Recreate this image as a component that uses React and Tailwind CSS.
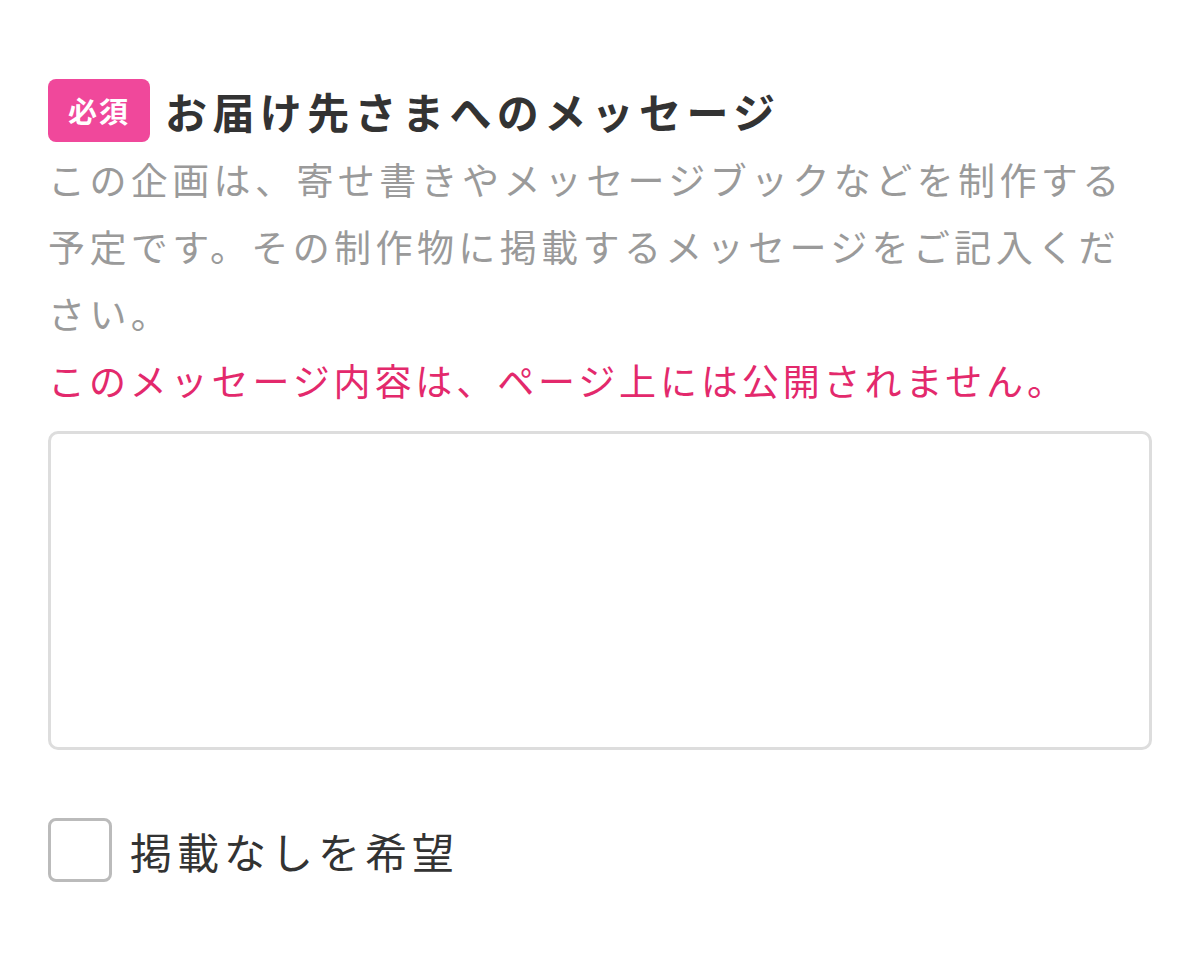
import { useState } from "react";

const App = () => {
  const [message, setMessage] = useState("");
  const [noPublish, setNoPublish] = useState(false);

  return (
    <div
      className="min-h-[967px] bg-white px-[48px] pt-[79px]"
      style={{ fontFamily: '"Noto Sans CJK JP", "Noto Sans", sans-serif' }}
    >
      {/* Heading */}
      <div className="flex items-center gap-[15px]">
        <span className="flex h-[63px] w-[102px] items-center justify-center rounded-[8px] bg-[#f0489b] text-[29px] font-bold tracking-[2px] text-white">
          必須
        </span>
        <h2 className="text-[42px] font-bold leading-none tracking-[5.4px] text-[#333333]">
          お届け先さまへのメッセージ
        </h2>
      </div>

      {/* Description */}
      <p className="mt-[4px] text-[37px] leading-[67px] tracking-[4.4px] text-[#9a9a9a]">
        この企画は、寄せ書きやメッセージブックなどを制作する予定です。その制作物に掲載するメッセージをご記入ください。
      </p>
      <p className="text-[37px] leading-[67px] tracking-[3.9px] text-[#e3296c]">
        このメッセージ内容は、ページ上には公開されません。
      </p>

      {/* Message box */}
      <textarea
        value={message}
        onChange={(e) => setMessage(e.target.value)}
        className="mt-[17px] block h-[319px] w-full resize-none rounded-[10px] border-[3px] border-[#dddddd] p-4 text-[32px] outline-none"
      />

      {/* Opt-out checkbox */}
      <label className="mt-[68px] flex cursor-pointer items-center gap-[18px]">
        <input
          type="checkbox"
          checked={noPublish}
          onChange={(e) => setNoPublish(e.target.checked)}
          className="peer sr-only"
        />
        <span className="h-[64px] w-[64px] rounded-[8px] border-[3px] border-[#bbbbbb] bg-white" />
        <span className="text-[42px] tracking-[5px] text-[#333333]">掲載なしを希望</span>
      </label>
    </div>
  );
};

export default App;
